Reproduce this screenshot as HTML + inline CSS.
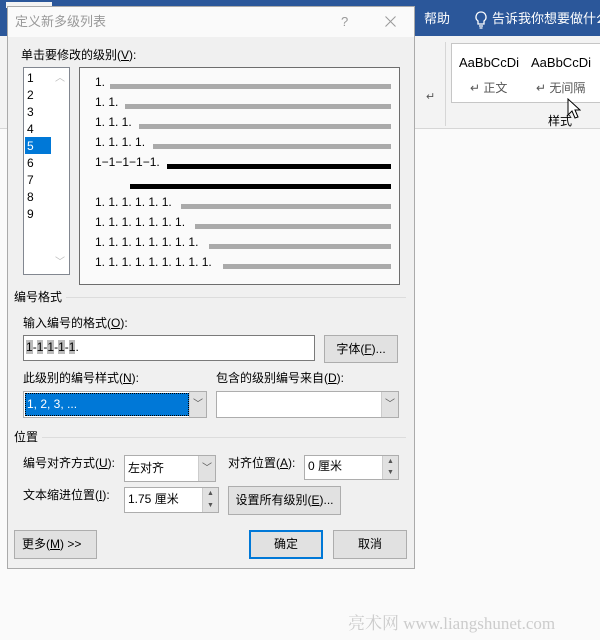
<!DOCTYPE html>
<html><head><meta charset="utf-8"><style>
*{margin:0;padding:0;box-sizing:border-box}
body{width:600px;height:640px;position:relative;background:#fafafa;overflow:hidden;font-family:"Liberation Sans","Noto Sans CJK SC",sans-serif;font-size:12px;color:#000}
.a{position:absolute;white-space:nowrap}
.t{position:absolute;white-space:nowrap;line-height:14px}
.p{position:absolute;white-space:nowrap;line-height:14px;font-size:12px}
.bar{position:absolute;height:5px;background:#aaa}
.blk{position:absolute;height:5px;background:#000}
.btn{position:absolute;background:#e1e1e1;border:1px solid #adadad;text-align:center;line-height:26px}
.box{position:absolute;background:#fff;border:1px solid #7a7a7a}
.arr{position:absolute;background:#e1e1e1;border-left:1px solid #ccc;text-align:center;color:#555;font-size:10px}
.grp{position:absolute;height:1px;background:#dcdcdc}
u{text-decoration:underline}
</style></head><body>
<div class="a" style="left:0;top:0;width:600px;height:36px;background:#2b579a"></div>
<div class="a" style="left:6px;top:2px;width:46px;height:6px;background:#f3f3f3"></div>
<div class="a" style="left:0;top:36px;width:600px;height:93px;background:#f3f3f3;border-bottom:1px solid #d6d6d6"></div>
<div class="t" style="left:424px;top:12px;color:#fff;font-size:13px">帮助</div>
<svg class="a" style="left:474px;top:11px" width="14" height="18" viewBox="0 0 14 18"><path d="M7 1a5 5 0 0 0-3 9v3h6v-3a5 5 0 0 0-3-9zM5 15h4M5.5 17h3" fill="none" stroke="#fff" stroke-width="1.3"/></svg>
<div class="t" style="left:492px;top:12px;color:#fff;font-size:13px">告诉我你想要做什么</div>
<div class="a" style="left:445px;top:42px;width:1px;height:84px;background:#d6d6d6"></div>
<div class="a" style="left:451px;top:43px;width:152px;height:60px;background:#fff;border:1px solid #c6c6c6"></div>
<div class="a" style="left:459px;top:56px;width:60px;overflow:hidden;font-size:13px;line-height:14px">AaBbCcDi</div>
<div class="a" style="left:531px;top:56px;width:60px;overflow:hidden;font-size:13px;line-height:14px">AaBbCcDi</div>
<div class="t" style="left:470px;top:81px;color:#555">↵ 正文</div>
<div class="t" style="left:536px;top:81px;color:#555">↵ 无间隔</div>
<div class="t" style="left:548px;top:114px">样式</div>
<div class="t" style="left:426px;top:90px;color:#555;font-size:11px">↵</div>
<svg class="a" style="left:567px;top:98px" width="14" height="22" viewBox="0 0 14 22"><path d="M1 1v16l4-4 3 7 3-1-3-7h5z" fill="#fff" stroke="#000"/></svg>

<!-- dialog -->
<div class="a" style="left:7px;top:6px;width:408px;height:563px;background:#f0f0f0;border:1px solid #aaa"></div>
<div class="a" style="left:8px;top:7px;width:406px;height:30px;background:#fafafa"></div>
<div class="t" style="left:15px;top:15px;color:#999;font-size:13px">定义新多级列表</div>
<div class="t" style="left:341px;top:15px;color:#999;font-size:13px">?</div>
<svg class="a" style="left:385px;top:16px" width="11" height="11" viewBox="0 0 11 11"><path d="M0.5 0.5l10 10M10.5 0.5l-10 10" stroke="#999" stroke-width="1"/></svg>

<div class="t" style="left:21px;top:48px">单击要修改的级别(<u>V</u>):</div>
<div class="a" style="left:23px;top:67px;width:47px;height:208px;background:#fff;border:1px solid #828790"></div>
<div class="t" style="left:27px;top:71px">1</div>
<div class="t" style="left:27px;top:88px">2</div>
<div class="t" style="left:27px;top:105px">3</div>
<div class="t" style="left:27px;top:122px">4</div>
<div class="a" style="left:25px;top:137px;width:26px;height:17px;background:#0078d7"></div>
<div class="t" style="left:27px;top:139px;color:#fff">5</div>
<div class="t" style="left:27px;top:156px">6</div>
<div class="t" style="left:27px;top:173px">7</div>
<div class="t" style="left:27px;top:190px">8</div>
<div class="t" style="left:27px;top:207px">9</div>
<div class="t" style="left:55px;top:72px;color:#bbb;font-size:10px">︿</div>
<div class="t" style="left:55px;top:256px;color:#bbb;font-size:10px">﹀</div>

<div class="a" style="left:79px;top:67px;width:321px;height:218px;background:#fafafa;border:1px solid #6d6d6d"></div>
<div class="p" style="left:95px;top:75px">1.</div><div class="bar" style="left:110px;top:84px;width:281px"></div>
<div class="p" style="left:95px;top:95px">1. 1.</div><div class="bar" style="left:125px;top:104px;width:266px"></div>
<div class="p" style="left:95px;top:115px">1. 1. 1.</div><div class="bar" style="left:139px;top:124px;width:252px"></div>
<div class="p" style="left:95px;top:135px">1. 1. 1. 1.</div><div class="bar" style="left:153px;top:144px;width:238px"></div>
<div class="p" style="left:95px;top:155px">1−1−1−1−1.</div><div class="blk" style="left:167px;top:164px;width:224px"></div>
<div class="blk" style="left:130px;top:184px;width:261px"></div>
<div class="p" style="left:95px;top:195px">1. 1. 1. 1. 1. 1.</div><div class="bar" style="left:181px;top:204px;width:210px"></div>
<div class="p" style="left:95px;top:215px">1. 1. 1. 1. 1. 1. 1.</div><div class="bar" style="left:195px;top:224px;width:196px"></div>
<div class="p" style="left:95px;top:235px">1. 1. 1. 1. 1. 1. 1. 1.</div><div class="bar" style="left:209px;top:244px;width:182px"></div>
<div class="p" style="left:95px;top:255px">1. 1. 1. 1. 1. 1. 1. 1. 1.</div><div class="bar" style="left:223px;top:264px;width:168px"></div>

<div class="t" style="left:14px;top:290px">编号格式</div>
<div class="grp" style="left:66px;top:297px;width:340px"></div>
<div class="t" style="left:23px;top:316px">输入编号的格式(<u>O</u>):</div>
<div class="box" style="left:23px;top:335px;width:292px;height:26px"></div>
<div class="t" style="left:26px;top:340px"><span style="background:#bbb">1</span>-<span style="background:#bbb">1</span>-<span style="background:#bbb">1</span>-<span style="background:#bbb">1</span>-<span style="background:#bbb">1</span>.</div>
<div class="btn" style="left:324px;top:335px;width:74px;height:28px">字体(<u>F</u>)...</div>

<div class="t" style="left:23px;top:371px">此级别的编号样式(<u>N</u>):</div>
<div class="t" style="left:216px;top:371px">包含的级别编号来自(<u>D</u>):</div>
<div class="box" style="left:23px;top:391px;width:184px;height:27px;border-color:#adadad"></div>
<div class="a" style="left:25px;top:393px;width:164px;height:23px;background:#0078d7;outline:1px dotted #000;outline-offset:-1px"></div>
<div class="t" style="left:27px;top:397px;color:#fff">1, 2, 3, ...</div>
<div class="arr" style="left:189px;top:392px;width:17px;height:25px;line-height:25px">﹀</div>
<div class="box" style="left:216px;top:391px;width:183px;height:27px;border-color:#adadad"></div>
<div class="arr" style="left:381px;top:392px;width:17px;height:25px;line-height:25px">﹀</div>

<div class="t" style="left:14px;top:430px">位置</div>
<div class="grp" style="left:42px;top:437px;width:364px"></div>
<div class="t" style="left:23px;top:456px">编号对齐方式(<u>U</u>):</div>
<div class="box" style="left:124px;top:455px;width:92px;height:27px;border-color:#adadad"></div>
<div class="t" style="left:128px;top:461px">左对齐</div>
<div class="arr" style="left:198px;top:456px;width:17px;height:25px;line-height:25px">﹀</div>
<div class="t" style="left:228px;top:456px">对齐位置(<u>A</u>):</div>
<div class="box" style="left:304px;top:455px;width:95px;height:25px;border-color:#adadad"></div>
<div class="t" style="left:308px;top:459px">0 厘米</div>
<div class="arr" style="left:382px;top:456px;width:16px;height:23px;font-size:7px;line-height:11px">▲<br>▼</div>
<div class="t" style="left:23px;top:488px">文本缩进位置(<u>I</u>):</div>
<div class="box" style="left:124px;top:487px;width:95px;height:26px;border-color:#adadad"></div>
<div class="t" style="left:128px;top:492px">1.75 厘米</div>
<div class="arr" style="left:202px;top:488px;width:16px;height:24px;font-size:7px;line-height:12px">▲<br>▼</div>
<div class="btn" style="left:228px;top:486px;width:113px;height:29px;line-height:27px">设置所有级别(<u>E</u>)...</div>

<div class="btn" style="left:14px;top:530px;width:83px;height:29px;text-align:left;padding-left:7px;line-height:27px">更多(<u>M</u>) &gt;&gt;</div>
<div class="btn" style="left:249px;top:530px;width:74px;height:29px;border:2px solid #0078d7;line-height:25px">确定</div>
<div class="btn" style="left:333px;top:530px;width:74px;height:29px;line-height:27px">取消</div>

<div class="t" style="left:348px;top:614px;color:#ccc;font-family:'Liberation Serif','Noto Serif CJK SC',serif;font-size:17px;line-height:20px">亮术网 www.liangshunet.com</div>
</body></html>
